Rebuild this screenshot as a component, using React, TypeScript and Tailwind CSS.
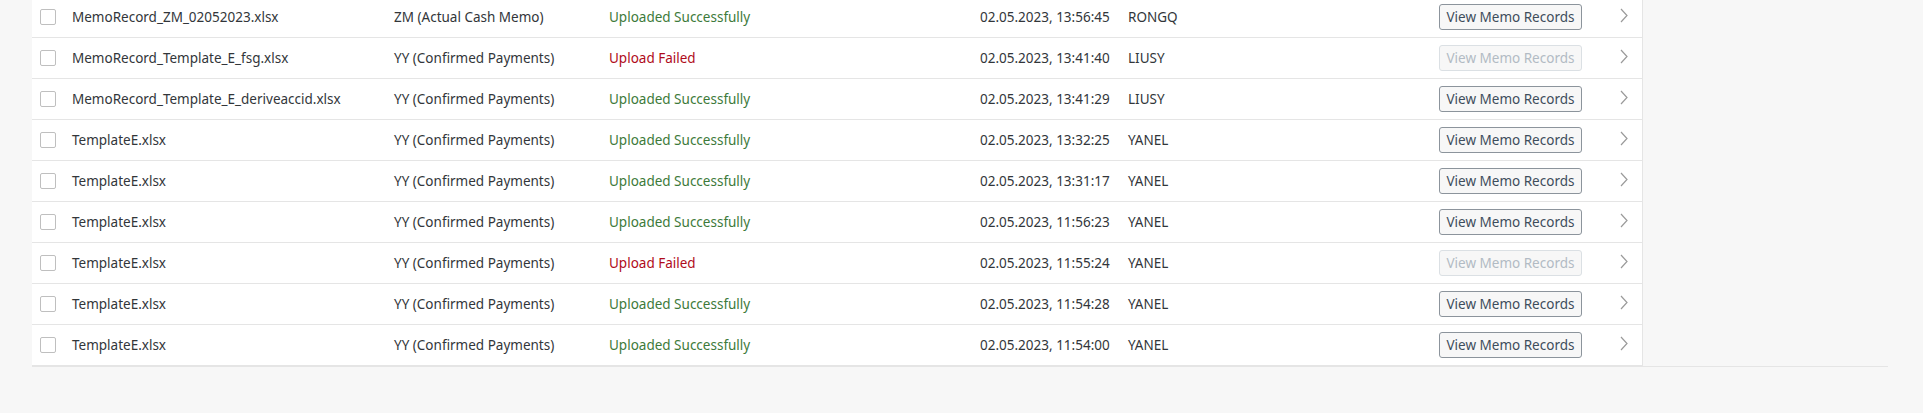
type Row = {
  file: string;
  type: string;
  ok: boolean;
  date: string;
  user: string;
};

const rows: Row[] = [
  { file: "MemoRecord_ZM_02052023.xlsx", type: "ZM (Actual Cash Memo)", ok: true, date: "02.05.2023, 13:56:45", user: "RONGQ" },
  { file: "MemoRecord_Template_E_fsg.xlsx", type: "YY (Confirmed Payments)", ok: false, date: "02.05.2023, 13:41:40", user: "LIUSY" },
  { file: "MemoRecord_Template_E_deriveaccid.xlsx", type: "YY (Confirmed Payments)", ok: true, date: "02.05.2023, 13:41:29", user: "LIUSY" },
  { file: "TemplateE.xlsx", type: "YY (Confirmed Payments)", ok: true, date: "02.05.2023, 13:32:25", user: "YANEL" },
  { file: "TemplateE.xlsx", type: "YY (Confirmed Payments)", ok: true, date: "02.05.2023, 13:31:17", user: "YANEL" },
  { file: "TemplateE.xlsx", type: "YY (Confirmed Payments)", ok: true, date: "02.05.2023, 11:56:23", user: "YANEL" },
  { file: "TemplateE.xlsx", type: "YY (Confirmed Payments)", ok: false, date: "02.05.2023, 11:55:24", user: "YANEL" },
  { file: "TemplateE.xlsx", type: "YY (Confirmed Payments)", ok: true, date: "02.05.2023, 11:54:28", user: "YANEL" },
  { file: "TemplateE.xlsx", type: "YY (Confirmed Payments)", ok: true, date: "02.05.2023, 11:54:00", user: "YANEL" },
];

function Chevron() {
  return (
    <svg width="8" height="15" viewBox="0 0 8 15" fill="none">
      <polyline points="1,1 7,7.5 1,14" stroke="#9a9a9a" strokeWidth="1.2" />
    </svg>
  );
}

function UploadRow({ row }: { row: Row }) {
  return (
    <div className="grid h-[41px] grid-cols-[40px_322px_215px_371px_148px_311px_181px_22px] items-center border-b border-[#e5e5e5] text-[13.5px] text-[#32363a]">
      <div className="pl-2">
        <div className="h-4 w-4 rounded-[2px] border border-[#bfbfbf] bg-white" />
      </div>
      <div>{row.file}</div>
      <div>{row.type}</div>
      <div className={row.ok ? "text-[#3d7a3a]" : "text-[#b00b1a]"}>
        {row.ok ? "Uploaded Successfully" : "Upload Failed"}
      </div>
      <div>{row.date}</div>
      <div>{row.user}</div>
      <div>
        <button
          disabled={!row.ok}
          className={
            "h-[26px] w-[143px] rounded-[3px] border bg-[#f7f7f7] text-[13.5px] " +
            (row.ok
              ? "border-[#8c949c] text-[#3e4d5c]"
              : "border-[#dbe0e4] text-[#b2bbc4]")
          }
        >
          View Memo Records
        </button>
      </div>
      <div className="-mt-[4px]">
        <Chevron />
      </div>
    </div>
  );
}

export default function App() {
  return (
    <div className="h-[413px] w-full overflow-hidden bg-[#f7f7f7] font-['Noto_Sans',sans-serif]">
      <div className="-mt-[3px] ml-8 flex w-[1856px] border-b border-[#e5e5e5]">
        <div className="w-[1611px] border-r border-[#e5e5e5] bg-white">
          {rows.map((r, i) => (
            <UploadRow key={i} row={r} />
          ))}
        </div>
      </div>
    </div>
  );
}
